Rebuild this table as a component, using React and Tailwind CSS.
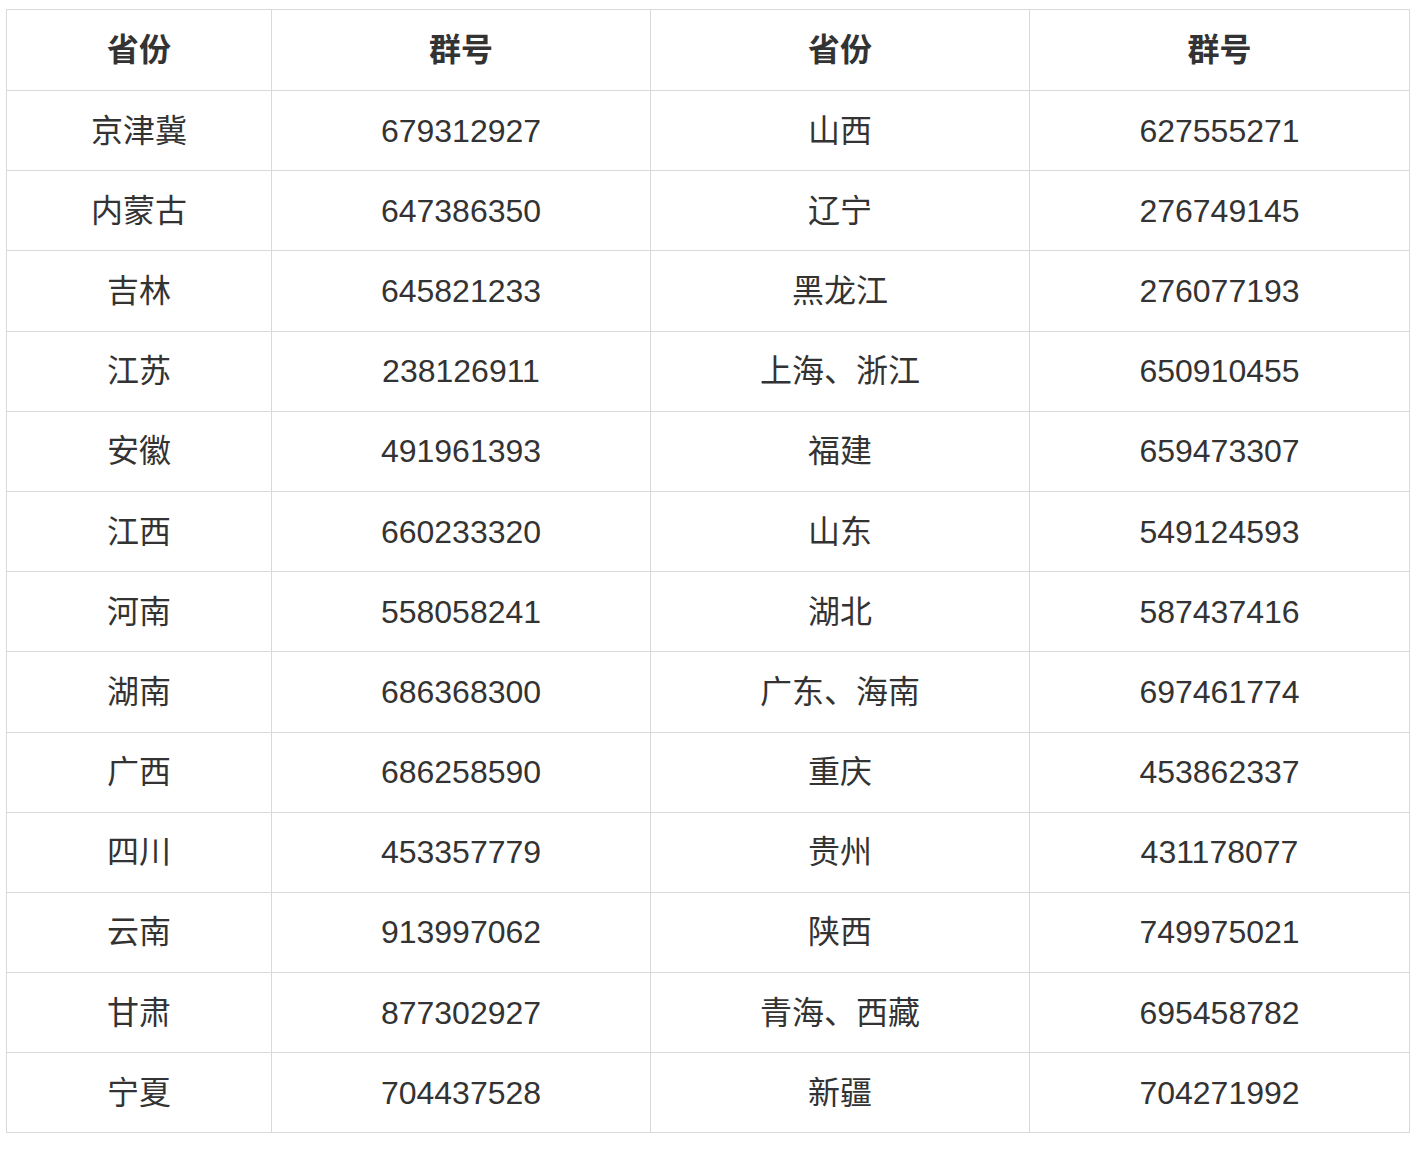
const ROWS = [
  ["京津冀", "679312927", "山西", "627555271"],
  ["内蒙古", "647386350", "辽宁", "276749145"],
  ["吉林", "645821233", "黑龙江", "276077193"],
  ["江苏", "238126911", "上海、浙江", "650910455"],
  ["安徽", "491961393", "福建", "659473307"],
  ["江西", "660233320", "山东", "549124593"],
  ["河南", "558058241", "湖北", "587437416"],
  ["湖南", "686368300", "广东、海南", "697461774"],
  ["广西", "686258590", "重庆", "453862337"],
  ["四川", "453357779", "贵州", "431178077"],
  ["云南", "913997062", "陕西", "749975021"],
  ["甘肃", "877302927", "青海、西藏", "695458782"],
  ["宁夏", "704437528", "新疆", "704271992"],
];

const cell = "border border-[#d9d9d9] text-center align-middle p-0";

export default function App() {
  return (
    <div className="bg-white min-h-[1152px] pt-[9px] pl-[6px] font-['Liberation_Sans','Noto_Sans_CJK_SC',sans-serif] text-[#333] text-[32px]">
      <table className="border-collapse w-[1404px] table-fixed">
        <colgroup>
          <col className="w-[265px]" />
          <col className="w-[379px]" />
          <col className="w-[379px]" />
          <col />
        </colgroup>
        <thead>
          <tr className="h-[81px]">
            <th className={`${cell} font-bold`}>省份</th>
            <th className={`${cell} font-bold`}>群号</th>
            <th className={`${cell} font-bold`}>省份</th>
            <th className={`${cell} font-bold`}>群号</th>
          </tr>
        </thead>
        <tbody>
          {ROWS.map((r) => (
            <tr key={r[0]} className="h-[80.2px]">
              {r.map((c, i) => (
                <td key={i} className={cell}>
                  {c}
                </td>
              ))}
            </tr>
          ))}
        </tbody>
      </table>
    </div>
  );
}
